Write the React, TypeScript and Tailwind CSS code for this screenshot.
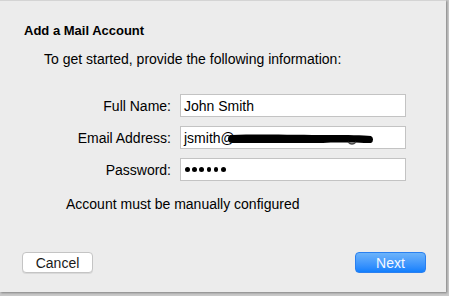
export default function App() {
  const rows = [
    { label: 'Full Name:', value: 'John Smith' },
    { label: 'Email Address:', value: 'jsmith@' },
    { label: 'Password:', value: '' },
  ];

  return (
    <div className="w-[449px] h-[296px] bg-[#c9c9c9] overflow-hidden font-['Liberation_Sans',Arial,sans-serif] text-[14px] text-black">
      <div className="w-[446px] h-[292px] bg-[#ececec] border-t border-[#d4d4d4] shadow-[1px_1px_2px_rgba(0,0,0,0.35)] flex flex-col">
        <div className="pl-[24px] pt-[22px] font-bold text-[13px] leading-[16px]">Add a Mail Account</div>
        <div className="pl-[44px] pt-[12px] leading-[16px]">To get started, provide the following information:</div>

        <div className="flex flex-col gap-[9px] pt-[27px]">
          {rows.map((row) => (
            <div key={row.label} className="flex items-center">
              <div className="w-[172px] text-right pr-[1px] leading-[16px]">{row.label}</div>
              <div className="ml-[8px] w-[226px] h-[23px] bg-white border border-[#c3c3c3] flex items-center pl-[3px] relative">
                {row.label === 'Password:' ? (
                  <div className="flex gap-[2.6px] pl-[1px]">
                    {[0, 1, 2, 3, 4, 5].map((i) => (
                      <span key={i} className="w-[4.6px] h-[4.6px] rounded-full bg-black" />
                    ))}
                  </div>
                ) : (
                  <span className="leading-[16px]">{row.value}</span>
                )}
                {row.label === 'Email Address:' && (
                  <svg className="absolute left-[47px] top-[5px]" width="148" height="14" viewBox="0 0 148 14">
                    <path d="M4 3 C30 2, 70 3, 100 3 C120 3, 135 3, 143 4 A4 4 0 0 1 143 11 C130 11, 110 10, 95 11 C60 11, 30 11, 4 11 A4 4 0 0 1 4 3 Z" fill="#000" />
                    <path d="M120 10 q4 4 8 0" stroke="#444" strokeWidth="1.2" fill="none" />
                  </svg>
                )}
              </div>
            </div>
          ))}
        </div>

        <div className="pl-[66px] pt-[15px] leading-[16px]">Account must be manually configured</div>

        <div className="flex justify-between items-center mt-auto mb-[19px] pl-[22px] pr-[20px]">
          <button className="w-[71px] h-[21px] bg-white border border-[#c4c4c4] rounded-[4px] shadow-[0_1px_0_rgba(0,0,0,0.08)] text-[14px] leading-[16px] text-[#1a1a1a]">
            Cancel
          </button>
          <button className="w-[71px] h-[21px] rounded-[4px] bg-gradient-to-b from-[#6cb3fa] to-[#0f7ffd] border border-[#2a80f0] text-[14px] leading-[16px] text-[#f4f8ff]">
            Next
          </button>
        </div>
      </div>
    </div>
  );
}
